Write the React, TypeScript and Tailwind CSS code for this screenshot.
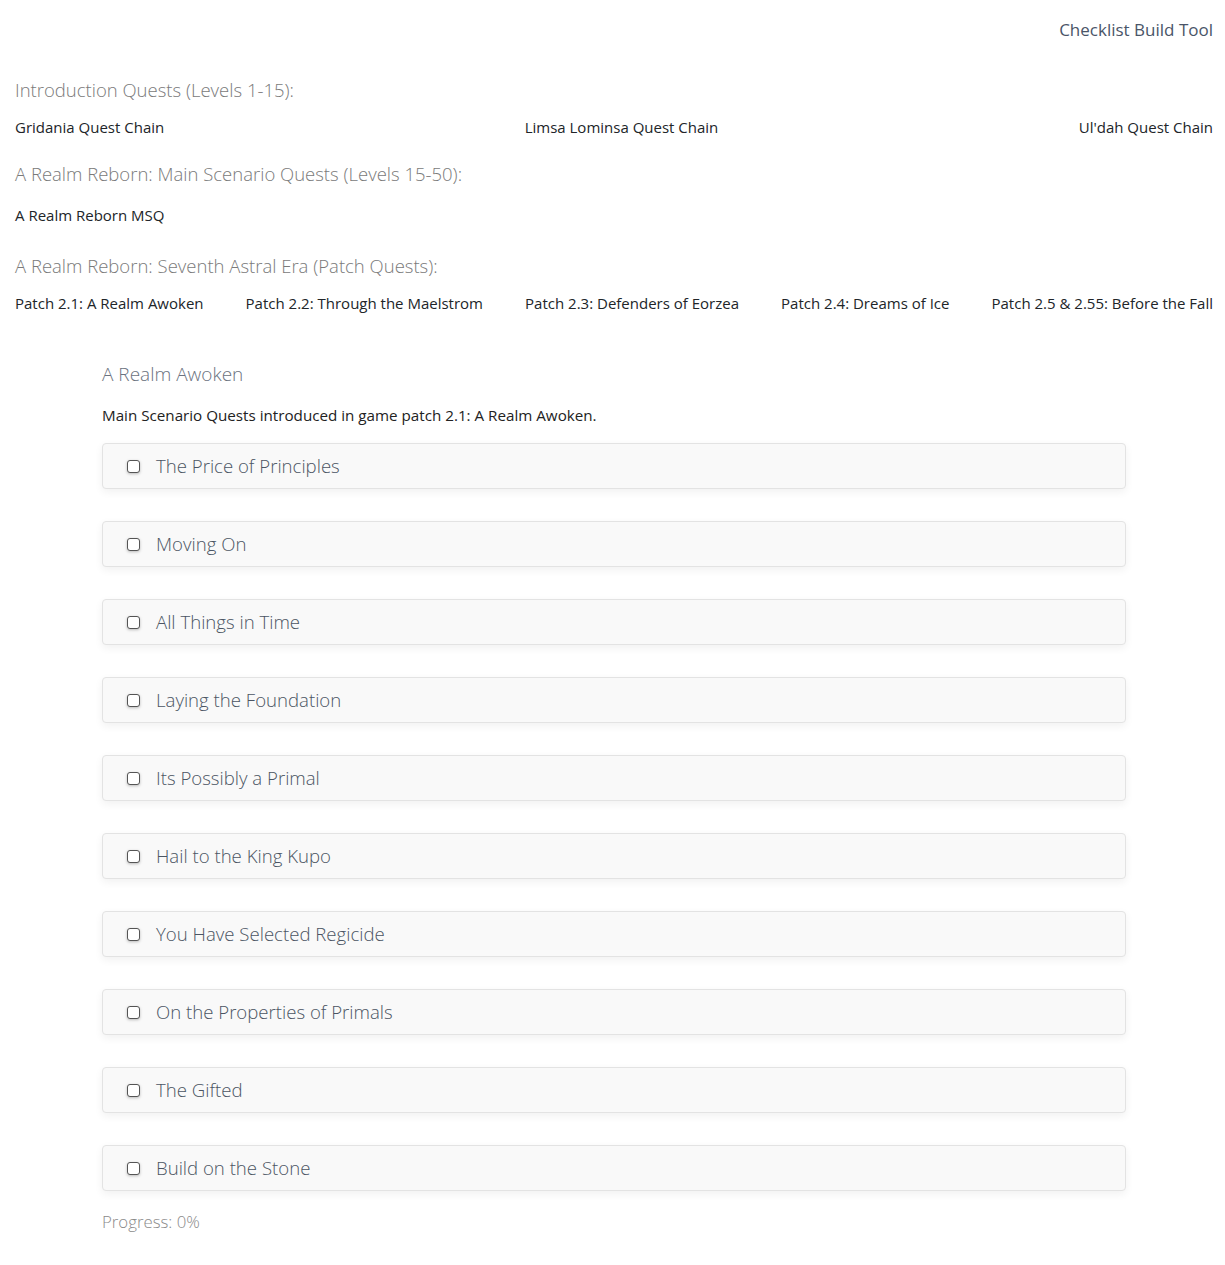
import React from 'react';

const quests = [
  'The Price of Principles',
  'Moving On',
  'All Things in Time',
  'Laying the Foundation',
  'Its Possibly a Primal',
  'Hail to the King Kupo',
  'You Have Selected Regicide',
  'On the Properties of Primals',
  'The Gifted',
  'Build on the Stone',
];

const patches = [
  'Patch 2.1: A Realm Awoken',
  'Patch 2.2: Through the Maelstrom',
  'Patch 2.3: Defenders of Eorzea',
  'Patch 2.4: Dreams of Ice',
  'Patch 2.5 & 2.55: Before the Fall',
];

function SectionTitle({ children, className = '' }: { children: React.ReactNode; className?: string }) {
  return <h2 className={`text-[18.5px] leading-[28px] font-light text-[#7a7a7a] ${className}`}>{children}</h2>;
}

function LinkRow({ items, className = '' }: { items: string[]; className?: string }) {
  return (
    <div className={`flex justify-between text-[15px] leading-[20px] text-[#212529] ${className}`}>
      {items.map((t) => (
        <a key={t} className="cursor-pointer">{t}</a>
      ))}
    </div>
  );
}

function QuestCard({ name }: { name: string }) {
  return (
    <label className="flex items-center h-[46px] pl-[24px] rounded-[4px] border border-[#e3e3e3] bg-[#f9f9f9] shadow-[0_3px_8px_rgba(0,0,0,0.06)]">
      <span className="w-[13px] h-[13px] rounded-[3px] border border-[#555] bg-white shadow-[0_1px_3px_rgba(0,0,0,0.25)]" />
      <span className="ml-[16px] text-[18.6px] font-light text-[#4b5563]">{name}</span>
    </label>
  );
}

export default function App() {
  return (
    <div className="min-h-screen bg-white pl-[15px] pr-[12px]" style={{ fontFamily: '"Open Sans", "Noto Sans", sans-serif' }}>
      <div className="flex justify-end items-center h-[60px]">
        <span className="text-[17px] text-[#4a5568]">Checklist Build Tool</span>
      </div>

      <SectionTitle className="mt-[16px]">Introduction Quests (Levels 1-15):</SectionTitle>
      <LinkRow className="mt-[13px]" items={['Gridania Quest Chain', 'Limsa Lominsa Quest Chain', "Ul'dah Quest Chain"]} />

      <SectionTitle className="mt-[23px]">A Realm Reborn: Main Scenario Quests (Levels 15-50):</SectionTitle>
      <LinkRow className="mt-[17px]" items={['A Realm Reborn MSQ']} />

      <SectionTitle className="mt-[27px]">A Realm Reborn: Seventh Astral Era (Patch Quests):</SectionTitle>
      <LinkRow className="mt-[13px]" items={patches} />

      <div className="w-[1024px] mx-auto mt-[47px] pb-[40px]">
        <h3 className="text-[19px] leading-[28px] font-light text-[#6b7280]">A Realm Awoken</h3>
        <p className="mt-[17px] text-[15.2px] leading-[20px] text-[#222]">
          Main Scenario Quests introduced in game patch 2.1: A Realm Awoken.
        </p>
        <div className="mt-[18px] flex flex-col gap-[32px]">
          {quests.map((q) => (
            <QuestCard key={q} name={q} />
          ))}
        </div>
        <p className="mt-[19px] text-[16.8px] leading-[24px] font-light text-[#8a8a8a]">Progress: 0%</p>
      </div>
    </div>
  );
}
